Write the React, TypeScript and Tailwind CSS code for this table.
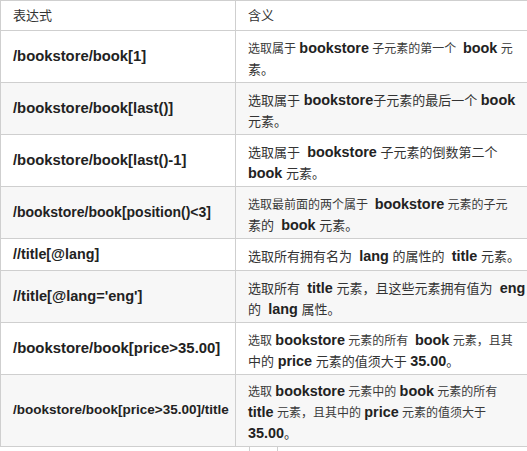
type Seg = [string, "b" | "s" | "m"];

interface Row {
  expr: string;
  exprSize: string;
  height: string;
  gray: boolean;
  lines: Seg[][];
}

const rows: Row[] = [
  {
    expr: "/bookstore/book[1]",
    exprSize: "text-[14.8px]",
    height: "h-[52px]",
    gray: false,
    lines: [
      [["选取属于 ", "s"], ["bookstore", "b"], [" 子元素的第一个\u00a0 ", "s"], ["book", "b"], [" 元", "s"]],
      [["素。", "m"]],
    ],
  },
  {
    expr: "/bookstore/book[last()]",
    exprSize: "text-[14.8px]",
    height: "h-[52px]",
    gray: true,
    lines: [
      [["选取属于 ", "m"], ["bookstore", "b"], ["子元素的最后一个 ", "m"], ["book", "b"]],
      [["元素。", "m"]],
    ],
  },
  {
    expr: "/bookstore/book[last()-1]",
    exprSize: "text-[14.8px]",
    height: "h-[52px]",
    gray: false,
    lines: [
      [["选取属于\u00a0 ", "m"], ["bookstore", "b"], [" 子元素的倒数第二个", "m"]],
      [["book", "b"], [" 元素。", "m"]],
    ],
  },
  {
    expr: "/bookstore/book[position()<3]",
    exprSize: "text-[14px]",
    height: "h-[52px]",
    gray: true,
    lines: [
      [["选取最前面的两个属于\u00a0 ", "s"], ["bookstore", "b"], [" 元素的子元", "s"]],
      [["素的\u00a0 ", "m"], ["book", "b"], [" 元素。", "m"]],
    ],
  },
  {
    expr: "//title[@lang]",
    exprSize: "text-[14.3px]",
    height: "h-[32px]",
    gray: false,
    lines: [
      [["选取所有拥有名为\u00a0 ", "m"], ["lang", "b"], [" 的属性的\u00a0 ", "m"], ["title", "b"], [" 元素。", "m"]],
    ],
  },
  {
    expr: "//title[@lang='eng']",
    exprSize: "text-[14.6px]",
    height: "h-[52px]",
    gray: true,
    lines: [
      [["选取所有\u00a0 ", "m"], ["title", "b"], [" 元素，且这些元素拥有值为\u00a0 ", "m"], ["eng", "b"]],
      [["的\u00a0 ", "m"], ["lang", "b"], [" 属性。", "m"]],
    ],
  },
  {
    expr: "/bookstore/book[price>35.00]",
    exprSize: "text-[14.9px]",
    height: "h-[52px]",
    gray: false,
    lines: [
      [["选取 ", "s"], ["bookstore", "b"], [" 元素的所有\u00a0 ", "s"], ["book", "b"], [" 元素，且其", "s"]],
      [["中的 ", "m"], ["price", "b"], [" 元素的值须大于 ", "m"], ["35.00", "b"], ["。", "m"]],
    ],
  },
  {
    expr: "/bookstore/book[price>35.00]/title",
    exprSize: "text-[13.5px]",
    height: "h-[72px]",
    gray: true,
    lines: [
      [["选取 ", "s"], ["bookstore", "b"], [" 元素中的 ", "s"], ["book", "b"], [" 元素的所有", "s"]],
      [["title", "b"], [" 元素，且其中的 ", "s"], ["price", "b"], [" 元素的值须大于", "s"]],
      [["35.00", "b"], ["。", "m"]],
    ],
  },
];

function Piece({ seg }: { seg: Seg }) {
  const [text, kind] = seg;
  if (kind === "b") return <span className="text-[14.4px] font-bold text-[#222]">{text}</span>;
  if (kind === "s") return <span className="text-[12px] text-[#3a3a3a]">{text}</span>;
  return <span className="text-[13px] text-[#333]">{text}</span>;
}

export default function App() {
  return (
    <div className="h-[451px] w-[527px] overflow-hidden bg-white font-['Liberation_Sans','Noto_Sans_CJK_SC',sans-serif] text-[#333]">
      <div className="w-[560px] border-l border-t border-[#cfcfcf]">
        {/* header */}
        <div className="flex h-[30px] border-b border-[#cfcfcf]">
          <div className="flex w-[235px] items-center border-r border-[#cfcfcf] pl-3 text-[13px]">表达式</div>
          <div className="flex flex-1 items-center pl-3 text-[13px]">含义</div>
        </div>
        {rows.map((row) => (
          <div
            key={row.expr}
            className={`flex ${row.height} border-b border-[#cfcfcf] ${row.gray ? "bg-[#f7f7f7]" : "bg-white"}`}
          >
            <div
              className={`flex w-[235px] items-center border-r border-[#cfcfcf] pl-3 font-bold text-[#222] ${row.exprSize}`}
            >
              {row.expr}
            </div>
            <div className="flex flex-1 flex-col justify-center pl-3 pt-[2px]">
              {row.lines.map((line, i) => (
                <div key={i} className="h-[21px] whitespace-pre leading-[21px]">
                  {line.map((seg, j) => (
                    <Piece key={j} seg={seg} />
                  ))}
                </div>
              ))}
            </div>
          </div>
        ))}
      </div>
      <div className="ml-[249px] h-[5px] w-[29px] border-x border-[#cfcfcf]" />
    </div>
  );
}
